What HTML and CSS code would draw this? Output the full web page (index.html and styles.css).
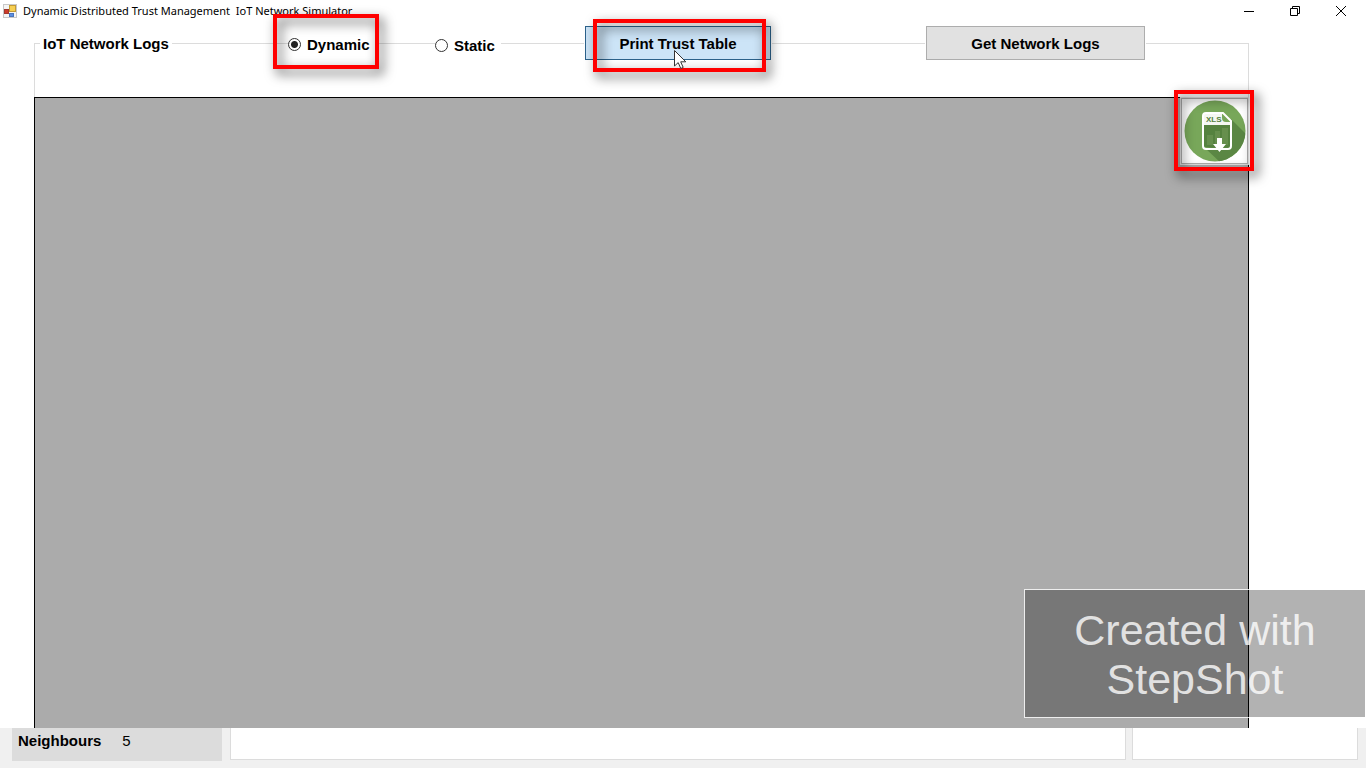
FILE: index.html
```html
<!DOCTYPE html>
<html lang="en">
<head>
<meta charset="utf-8">
<title>Dynamic Distributed Trust Management IoT Network Simulator</title>
<link rel="stylesheet" href="styles.css">
</head>
<body>
<main class="window">
  <header class="titlebar">
    <svg class="app-icon" viewBox="0 0 14 14" aria-hidden="true">
      <rect x="0.5" y="0.5" width="13" height="13" fill="#f4f4f4" stroke="#c8c8c8"/>
      <rect x="6.5" y="1.5" width="6" height="6" fill="#f6cf52" stroke="#c39a35"/>
      <rect x="1.500" y="5.5" width="4" height="4" fill="#cf3a2a" stroke="#a03a30"/>
      <rect x="6.5" y="9.5" width="4" height="3" fill="#5d8fe0" stroke="#4a74bd"/>
    </svg>
    <h1 class="title">Dynamic Distributed Trust Management&nbsp; IoT Network Simulator</h1>
    <div class="window-controls">
      <button class="control" type="button" aria-label="Minimize"><svg viewBox="0 0 12 12"><path d="M1 6.5H11"/></svg></button>
      <button class="control" type="button" aria-label="Restore"><svg viewBox="0 0 12 12"><path d="M1.500 3.500H8.500V10.500H1.500ZM3.500 3.500V1.500H10.500V8.500H8.500"/></svg></button>
      <button class="control" type="button" aria-label="Close"><svg viewBox="0 0 12 12"><path d="M1 1L11 11M11 1L1 11"/></svg></button>
    </div>
  </header>

  <section class="logs">
    <div class="toolbar">
      <h2 class="caption">IoT Network Logs</h2>
      <div class="anchor">
        <label class="option"><input class="radio" type="radio" name="mode" checked>Dynamic</label>
        <span class="mark mark-option"></span>
      </div>
      <div class="anchor">
        <label class="option option-static"><input class="radio" type="radio" name="mode">Static</label>
      </div>
      <div class="anchor">
        <button class="btn btn-hot" type="button">Print Trust Table</button>
        <span class="mark mark-print"></span>
        <svg class="pointer" viewBox="0 0 13 20" aria-hidden="true"><path d="M0.500 0.500V16L4.200 12.600L6.800 18.500L9.200 17.400L6.700 11.800H11.800Z" fill="#fff" stroke="#333" stroke-width="1"/></svg>
      </div>
      <div class="anchor">
        <button class="btn btn-logs" type="button">Get Network Logs</button>
      </div>
    </div>

    <div class="grid">
      <div class="export">
        <button class="export-btn" type="button" aria-label="Export XLS">
          <svg class="export-icon" viewBox="0 0 62 62">
            <defs><clipPath id="disc"><circle cx="31" cy="31" r="30.500"/></clipPath></defs>
            <circle cx="31" cy="31" r="30.500" fill="#78a75a"/>
            <path clip-path="url(#disc)" d="M47 19L64 36V64H38L21 48L46 44Z" fill="#5b8744"/>
            <path d="M20 25H46V47H20Z" fill="#55823f"/>
            <path d="M23 35H29V45H23ZM31 31H36V45H31ZM38 28H44V45H38Z" fill="#668f4d"/>
            <path d="M20 13H38V18Q38 22 42 22H47V25H20Z" fill="#f4f7f2"/>
            <path d="M39 13Q39 21 47 21Z" fill="#78a75a"/>
            <path d="M22 13H39L47 21V46Q47 49 44 49H22Q19 49 19 46V16Q19 13 22 13Z" fill="none" stroke="#fff" stroke-width="2"/>
            <path d="M33 38H38V44H42L35.500 52L29 44H33Z" fill="#fff"/>
            <text class="export-text" x="22" y="22">XLS</text>
          </svg>
        </button>
        <span class="mark mark-export"></span>
      </div>
    </div>
  </section>

  <aside class="watermark">Created with<br>StepShot</aside>
</main>

<footer class="status">
  <div class="neighbours"><strong>Neighbours</strong><span>5</span></div>
  <div class="box box-main"></div>
  <div class="box box-side"></div>
</footer>
</body>
</html>
```
FILE: styles.css
```css
* { box-sizing: border-box; }

body {
  margin: 0;
  height: 100vh;
  display: flex;
  flex-direction: column;
  overflow: hidden;
  background: #fff;
  color: #000;
  font-family: "Liberation Sans", Arial, sans-serif;
  font-size: 15px;
}

.window {
  position: relative;
  flex: 1;
  min-height: 0;
  display: flex;
  flex-direction: column;
}

.titlebar {
  display: flex;
  align-items: center;
  height: 22px;
  padding-left: 3px;
}

.app-icon { width: 14px; height: 14px; }

.title {
  flex: 1;
  margin: 0 0 0 6px;
  font-family: "Noto Sans", sans-serif;
  font-size: 11px;
  font-weight: 400;
  line-height: 22px;
}

.window-controls { display: flex; padding-right: 2px; }

.control {
  display: flex;
  align-items: center;
  justify-content: center;
  width: 46px;
  height: 20px;
  padding: 0;
  border: 0;
  background: none;
}

.control svg {
  width: 12px;
  height: 12px;
  fill: none;
  stroke: #000;
  stroke-width: 1;
}

.logs {
  flex: 1;
  display: flex;
  flex-direction: column;
  margin: 0 117px 0 34px;
}

.toolbar {
  position: relative;
  display: grid;
  grid-template-columns: 248fr 147fr 150fr 341fr 323fr;
  align-items: start;
  height: 75px;
  padding: 4px 0 0 6px;
  font-weight: 700;
}

.toolbar::before {
  content: "";
  position: absolute;
  inset: 21px 0 0 0;
  border: 1px solid #dcdcdc;
  border-bottom: 0;
}

.caption {
  position: relative;
  justify-self: start;
  margin: 0;
  padding: 0 3px;
  background: #fff;
  font-size: 15px;
  line-height: 36px;
}

.anchor { position: relative; justify-self: start; }

.option {
  display: flex;
  align-items: center;
  gap: 6px;
  height: 36px;
  padding-right: 6px;
  background: #fff;
}

.option-static { height: 38px; }

.radio {
  appearance: none;
  width: 13px;
  height: 13px;
  margin: 0;
  border: 1px solid #333;
  border-radius: 50%;
  background: #fff;
}

.radio:checked { background: radial-gradient(circle, #222 0 3px, #fff 4px); }

.btn {
  display: block;
  height: 34px;
  padding: 0;
  border: 1px solid #adadad;
  background: #e1e1e1;
  outline: 1px solid #fff;
  color: #000;
  font: inherit;
}

.btn-hot {
  width: 186px;
  border-color: #2c628b;
  background: #cce4f7;
}

.btn-logs { width: 219px; }

.mark {
  position: absolute;
  z-index: 1;
  border: 4px solid #f00;
  filter: drop-shadow(4px 5px 6px rgba(0, 0, 0, 0.7));
  pointer-events: none;
}

.mark-option { left: -15px; top: -12px; width: 106px; height: 55px; }
.mark-print { left: 8px; top: -7px; width: 173px; height: 53px; }
.mark-export { inset: -7px -5px -6px -6px; }

.pointer {
  position: absolute;
  z-index: 2;
  left: 89px;
  top: 24px;
  width: 13px;
  height: 20px;
}

.grid {
  flex: 1;
  display: flex;
  justify-content: flex-end;
  align-items: flex-start;
  border: 1px solid #000;
  border-bottom: 0;
  background: #ababab;
}

.export {
  position: relative;
  margin: -1px -1px 0 0;
}

.export-btn {
  display: flex;
  align-items: center;
  justify-content: center;
  width: 69px;
  height: 68px;
  padding: 0;
  border: 1px solid #e1e1e1;
  outline: 1px solid #adadad;
  outline-offset: -2px;
  background: #fff;
}

.export-icon { width: 62px; height: 62px; }

.export-text {
  font-size: 8px;
  font-weight: 700;
  fill: #55823f;
}

.watermark {
  position: absolute;
  z-index: 3;
  right: 1px;
  bottom: 10px;
  width: 341px;
  padding: 16px 0 13px;
  border: 1px solid rgba(255, 255, 255, 0.8);
  border-right: 0;
  background: rgba(0, 0, 0, 0.3);
  background-clip: padding-box;
  color: rgba(255, 255, 255, 0.8);
  font-size: 43px;
  line-height: 49px;
  text-align: center;
}

.status {
  display: flex;
  height: 40px;
  padding: 0 8px 7px 12px;
  background: #f0f0f0;
}

.neighbours {
  display: flex;
  gap: 21px;
  width: 210px;
  margin-right: 8px;
  padding-left: 6px;
  background: #dcdcdc;
  line-height: 26px;
}

.box {
  margin-bottom: 1px;
  border: 1px solid #dcdcdc;
  border-top: 0;
  background: #fff;
}

.box-main { flex: 1; margin-right: 6px; }
.box-side { width: 226px; }
```
